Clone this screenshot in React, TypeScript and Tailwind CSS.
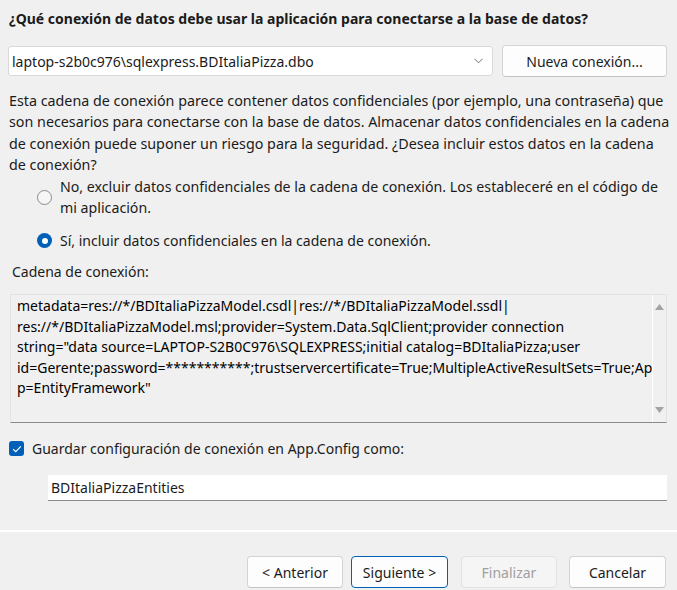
import React from 'react';

const Radio: React.FC<{ checked?: boolean }> = ({ checked }) =>
  checked ? (
    <span className="w-[15px] h-[15px] rounded-full bg-[#005fb8] flex items-center justify-center shrink-0">
      <span className="w-[6px] h-[6px] rounded-full bg-white" />
    </span>
  ) : (
    <span className="w-[15px] h-[15px] rounded-full border border-[#8a8a8a] bg-[#f6f6f6] shrink-0" />
  );

const Button: React.FC<{ label: string; primary?: boolean; disabled?: boolean; className?: string }> = ({
  label,
  primary,
  disabled,
  className = '',
}) => (
  <div
    className={
      'h-[32px] rounded-[4px] border flex items-center justify-center ' +
      (disabled
        ? 'bg-[#f5f5f5] border-[#e2e2e2] text-[#a0a0a0] '
        : primary
          ? 'bg-[#fdfdfd] border-[#005fb8] text-[#1b1b1b] '
          : 'bg-[#fdfdfd] border-[#d4d4d4] border-b-[#c4c4c4] text-[#1b1b1b] ') +
      className
    }
  >
    {label}
  </div>
);

export default function App() {
  return (
    <div className="w-[677px] h-[590px] overflow-hidden bg-[#f0f0f0] text-[#1b1b1b] text-[14px] leading-[21px] font-['Noto_Sans',sans-serif] flex flex-col">
      <h1 className="mt-[9px] ml-[9px] font-bold text-[14px] leading-[20px] whitespace-nowrap">
        ¿Qué conexión de datos debe usar la aplicación para conectarse a la base de datos?
      </h1>

      <div className="mt-[16px] flex items-center">
        <div className="ml-[8px] w-[485px] h-[30px] bg-white border border-[#d9d9d9] rounded-[3px] flex items-center pl-[3px] pr-[8px]">
          <span className="flex-1 whitespace-nowrap">laptop-s2b0c976\sqlexpress.BDItaliaPizza.dbo</span>
          <svg width="9" height="6" viewBox="0 0 9 6" className="mr-[1px]">
            <path d="M0.5 0.8 L4.5 4.8 L8.5 0.8" fill="none" stroke="#6e6e6e" strokeWidth="1" />
          </svg>
        </div>
        <Button label="Nueva conexión..." className="ml-[9px] w-[165px] h-[31px]" />
      </div>

      <p className="mt-[13px] ml-[9px] text-[14.3px] leading-[21.3px] whitespace-nowrap">
        Esta cadena de conexión parece contener datos confidenciales (por ejemplo, una contraseña) que
        <br />
        son necesarios para conectarse con la base de datos. Almacenar datos confidenciales en la cadena
        <br />
        de conexión puede suponer un riesgo para la seguridad. ¿Desea incluir estos datos en la cadena
        <br />
        de conexión?
      </p>

      <div className="mt-[1px] ml-[37px] flex items-center gap-[8px]">
        <Radio />
        <span className="whitespace-nowrap text-[14.2px]">
          No, excluir datos confidenciales de la cadena de conexión. Los estableceré en el código de
          <br />
          mi aplicación.
        </span>
      </div>

      <div className="mt-[12px] ml-[37px] flex items-center gap-[8px]">
        <Radio checked />
        <span className="whitespace-nowrap">Sí, incluir datos confidenciales en la cadena de conexión.</span>
      </div>

      <div className="mt-[10px] ml-[12px]">Cadena de conexión:</div>

      <div className="mt-[12px] ml-[10px] w-[657px] h-[129px] border border-[#e3e3e3] border-b-[#8c8c8c] flex">
        <div className="flex-1 pl-[6px] pt-[1px] leading-[20.5px] whitespace-nowrap text-black">
          metadata=res://*/BDItaliaPizzaModel.csdl|res://*/BDItaliaPizzaModel.ssdl|
          <br />
          res://*/BDItaliaPizzaModel.msl;provider=System.Data.SqlClient;provider connection
          <br />
          string="data source=LAPTOP-S2B0C976\SQLEXPRESS;initial catalog=BDItaliaPizza;user
          <br />
          id=Gerente;password=***********;trustservercertificate=True;MultipleActiveResultSets=True;Ap
          <br />
          p=EntityFramework"
        </div>
        <div className="w-[22px] border-l border-white flex flex-col items-center justify-between py-[9px]">
          <svg width="9" height="6" viewBox="0 0 9 6">
            <path d="M4.5 0 L9 6 L0 6 Z" fill="#a3a3a3" />
          </svg>
          <svg width="9" height="6" viewBox="0 0 9 6">
            <path d="M0 0 L9 0 L4.5 6 Z" fill="#a3a3a3" />
          </svg>
        </div>
      </div>

      <div className="mt-[15px] ml-[9px] flex items-center gap-[8px]">
        <span className="w-[15px] h-[15px] rounded-[3px] bg-[#005fb8] flex items-center justify-center">
          <svg width="10" height="8" viewBox="0 0 10 8">
            <path d="M1.2 4.2 L3.8 6.6 L8.8 1.4" fill="none" stroke="white" strokeWidth="1.2" />
          </svg>
        </span>
        <span className="whitespace-nowrap">Guardar configuración de conexión en App.Config como:</span>
      </div>

      <div className="mt-[16px] ml-[48px] w-[619px] h-[26px] bg-white border-b border-[#8c8c8c] flex items-center pl-[3px]">
        BDItaliaPizzaEntities
      </div>

      <div className="mt-[29px] h-[2px] bg-white" />

      <div className="mt-[24px] flex">
        <Button label="< Anterior" className="ml-[247px] w-[96px]" />
        <Button label="Siguiente >" primary className="ml-[8px] w-[97px]" />
        <Button label="Finalizar" disabled className="ml-[13px] w-[96px]" />
        <Button label="Cancelar" className="ml-[12px] w-[97px]" />
      </div>
    </div>
  );
}
